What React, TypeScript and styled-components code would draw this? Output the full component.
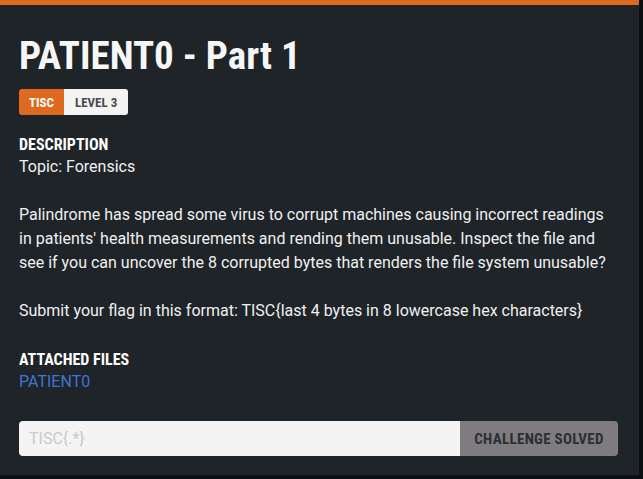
import React from "react";
import styled, { createGlobalStyle } from "styled-components";

const Global = createGlobalStyle`
  html, body { margin: 0; padding: 0; background: #0c0f11; }
  body { width: 643px; height: 479px; overflow: hidden; }
`;

const headFont = `Roboto, "Open Sans", sans-serif`;

const Card = styled.div`
  box-sizing: border-box;
  width: 639px;
  height: 475px;
  background: #1e2428;
  border-top: 5px solid #dd6a1f;
  padding: 28px 19px 0 19px;
  display: flex;
  flex-direction: column;
  color: #f2f2f2;
  font-family: Roboto, "Liberation Sans", sans-serif;
`;

const Title = styled.h1`
  margin: 0;
  font-family: ${headFont};
  font-stretch: 80%;
  font-weight: 700;
  font-size: 39px;
  line-height: 46px;
  color: #f7f7f7;
`;

const Badges = styled.div`
  display: flex;
  margin-top: 10px;
  align-self: flex-start;
  border-radius: 3px;
  overflow: hidden;
`;

const Badge = styled.span<{ $accent?: boolean }>`
  display: flex;
  align-items: center;
  height: 26px;
  padding: 0 ${(p) => (p.$accent ? "10px" : "11px")};
  background: ${(p) => (p.$accent ? "#dd6a1f" : "#f4f4f4")};
  color: ${(p) => (p.$accent ? "#ffffff" : "#4a4a4a")};
  font-family: ${headFont};
  font-stretch: 78%;
  font-weight: 700;
  font-size: 13px;
`;

const Label = styled.div<{ $top: number }>`
  margin-top: ${(p) => p.$top}px;
  font-family: ${headFont};
  font-stretch: 78%;
  font-weight: 700;
  font-size: 16px;
  line-height: 20px;
  color: #ffffff;
`;

const Text = styled.p<{ $top?: number }>`
  margin: ${(p) => p.$top ?? 0}px 0 0 0;
  max-width: 592px;
  font-size: 16px;
  line-height: 24px;
  color: #f0f0f0;
`;

const FileLink = styled.a`
  align-self: flex-start;
  font-size: 16px;
  line-height: 24px;
  color: #3f74d4;
  text-decoration: none;
`;

const Form = styled.div`
  display: flex;
  margin-top: 27px;
  width: 599px;
  height: 35px;
`;

const Input = styled.input`
  flex: 1;
  min-width: 0;
  box-sizing: border-box;
  border: none;
  outline: none;
  background: #f4f4f4;
  border-radius: 4px 0 0 4px;
  padding: 0 10px;
  font-family: Roboto, sans-serif;
  font-size: 16px;
  color: #333;
  &::placeholder { color: #c9c9c9; }
`;

const Button = styled.button`
  width: 158px;
  flex: none;
  border: none;
  background: #7f7c80;
  border-radius: 0 4px 4px 0;
  color: #2b2f33;
  font-family: ${headFont};
  font-stretch: 78%;
  font-weight: 700;
  font-size: 15px;
  white-space: nowrap;
  letter-spacing: 0.3px;
`;

export default function App() {
  return (
    <>
      <Global />
      <Card>
        <Title>PATIENT0 - Part 1</Title>
        <Badges>
          <Badge $accent>TISC</Badge>
          <Badge>LEVEL 3</Badge>
        </Badges>
        <Label $top={20}>DESCRIPTION</Label>
        <Text>Topic: Forensics</Text>
        <Text $top={24}>
          Palindrome has spread some virus to corrupt machines causing incorrect readings in patients' health
          measurements and rending them unusable. Inspect the file and see if you can uncover the 8 corrupted
          bytes that renders the file system unusable?
        </Text>
        <Text $top={24}>Submit your flag in this format: TISC{"{"}last 4 bytes in 8 lowercase hex characters{"}"}</Text>
        <Label $top={27}>ATTACHED FILES</Label>
        <FileLink href="#">PATIENT0</FileLink>
        <Form>
          <Input placeholder="TISC{.*}" />
          <Button>CHALLENGE SOLVED</Button>
        </Form>
      </Card>
    </>
  );
}
